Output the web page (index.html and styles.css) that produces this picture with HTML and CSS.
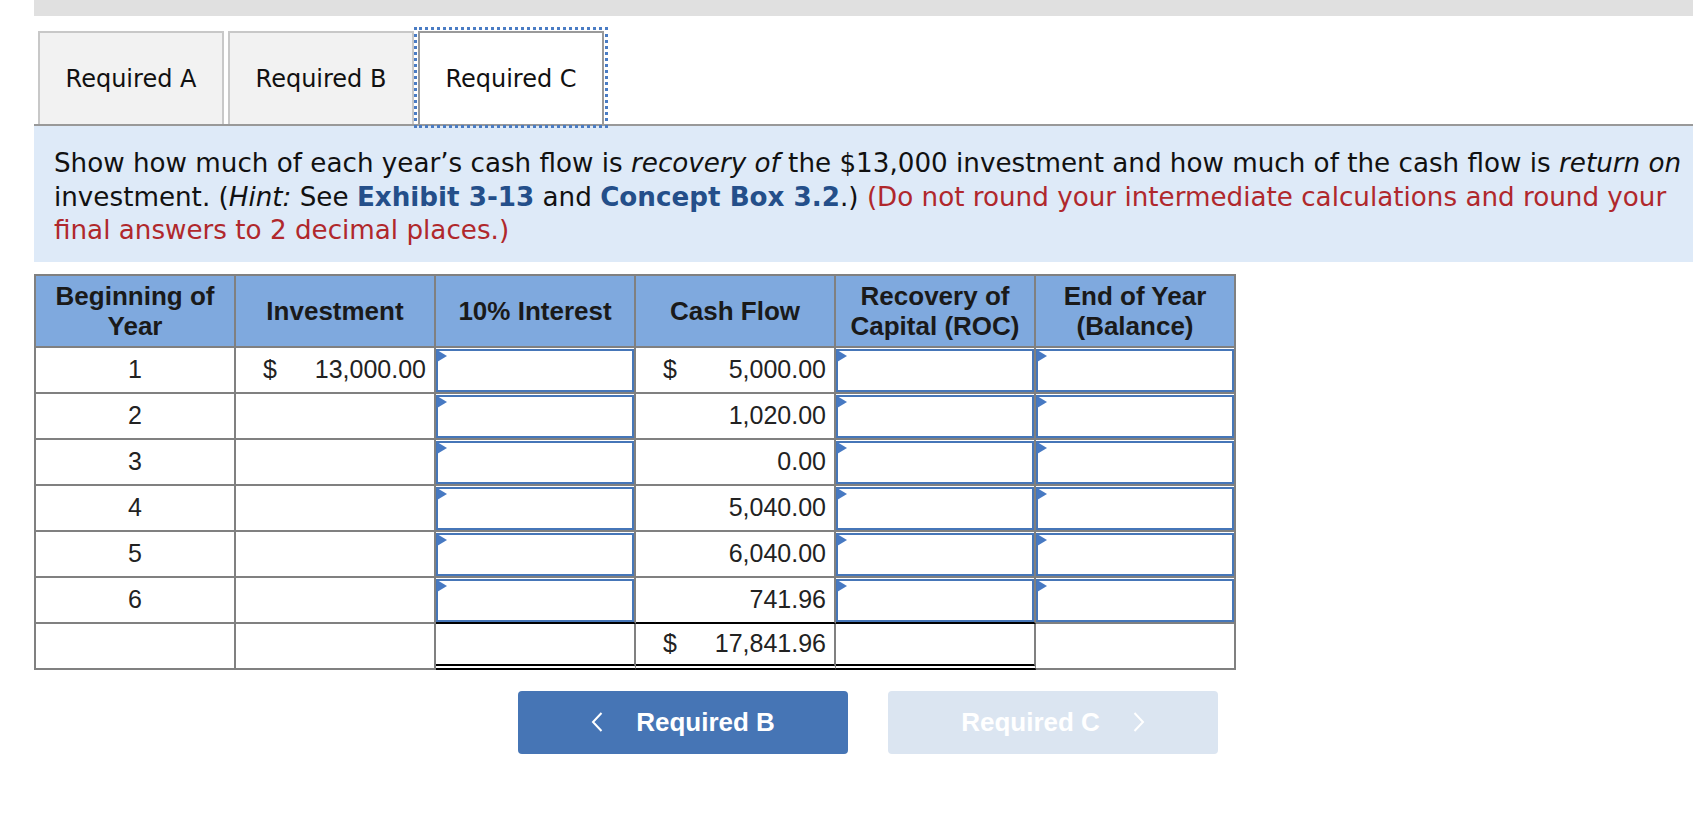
FILE: index.html
```html
<!DOCTYPE html>
<html lang="en">
<head>
<meta charset="utf-8">
<title>Required C</title>
<link rel="stylesheet" href="styles.css">
</head>
<body>
<div class="page">
  <div class="topbar"></div>
  <div class="tabs">
    <div class="tab">Required A</div>
    <div class="tab">Required B</div>
    <div class="tab active">Required C</div>
  </div>
  <div class="prompt">
    <p>Show how much of each year’s cash flow is <em>recovery of</em> the $13,000 investment and how much of the cash flow is <em>return on</em> investment. (<em>Hint:</em> See <b class="ref">Exhibit 3-13</b> and <b class="ref">Concept Box 3.2</b>.) <span class="warn">(Do not round your intermediate calculations and round your</span> <span class="warn">final answers to 2 decimal places.)</span></p>
  </div>
  <table class="grid">
    <thead>
      <tr>
        <th>Beginning of<br>Year</th>
        <th>Investment</th>
        <th>10% Interest</th>
        <th>Cash Flow</th>
        <th>Recovery of<br>Capital (ROC)</th>
        <th>End of Year<br>(Balance)</th>
      </tr>
    </thead>
    <tbody>
      <tr>
        <td class="yr">1</td>
        <td class="amt"><div class="money"><span>$</span><span>13,000.00</span></div></td>
        <td class="in"><div class="box"></div></td>
        <td class="amt"><div class="money"><span>$</span><span>5,000.00</span></div></td>
        <td class="in"><div class="box"></div></td>
        <td class="in"><div class="box"></div></td>
      </tr>
      <tr>
        <td class="yr">2</td>
        <td></td>
        <td class="in"><div class="box"></div></td>
        <td class="num">1,020.00</td>
        <td class="in"><div class="box"></div></td>
        <td class="in"><div class="box"></div></td>
      </tr>
      <tr>
        <td class="yr">3</td>
        <td></td>
        <td class="in"><div class="box"></div></td>
        <td class="num">0.00</td>
        <td class="in"><div class="box"></div></td>
        <td class="in"><div class="box"></div></td>
      </tr>
      <tr>
        <td class="yr">4</td>
        <td></td>
        <td class="in"><div class="box"></div></td>
        <td class="num">5,040.00</td>
        <td class="in"><div class="box"></div></td>
        <td class="in"><div class="box"></div></td>
      </tr>
      <tr>
        <td class="yr">5</td>
        <td></td>
        <td class="in"><div class="box"></div></td>
        <td class="num">6,040.00</td>
        <td class="in"><div class="box"></div></td>
        <td class="in"><div class="box"></div></td>
      </tr>
      <tr class="last">
        <td class="yr">6</td>
        <td></td>
        <td class="in sum-top"><div class="box"></div></td>
        <td class="num sum-top">741.96</td>
        <td class="in sum-top"><div class="box"></div></td>
        <td class="in"><div class="box"></div></td>
      </tr>
      <tr class="total">
        <td></td>
        <td></td>
        <td class="sum"></td>
        <td class="amt sum"><div class="money"><span>$</span><span>17,841.96</span></div></td>
        <td class="sum"></td>
        <td></td>
      </tr>
    </tbody>
  </table>
  <div class="nav">
    <div class="btn prev">
      <svg class="chev" width="12" height="20" viewBox="0 0 12 20"><polyline points="10.5,1 2,10 10.5,19" fill="none" stroke="#fff" stroke-width="2"/></svg>
      <span>Required B</span>
    </div>
    <div class="btn next">
      <span>Required C</span>
      <svg class="chev" width="12" height="20" viewBox="0 0 12 20"><polyline points="1.5,1 10,10 1.5,19" fill="none" stroke="#fff" stroke-width="2"/></svg>
    </div>
  </div>
</div>
</body>
</html>
```

FILE: styles.css
```css
html, body {
  margin: 0;
  padding: 0;
  background: #fff;
  overflow: hidden;
}

.page {
  margin-left: 34px;
  width: 1668px;
}

.topbar {
  height: 16px;
  background: #e0e0e0;
}

.tabs {
  display: flex;
  gap: 4px;
  padding-left: 4px;
  margin-top: 15px;
}

.tab {
  box-sizing: border-box;
  width: 186px;
  height: 93px;
  display: flex;
  align-items: center;
  justify-content: center;
  background: #f2f2f2;
  border: 2px solid #c8c8c8;
  border-bottom: none;
  font: 24px "DejaVu Sans", Verdana, sans-serif;
  color: #111;
}

.tab.active {
  background: #fff;
  border-color: #9a9a9a;
  outline: 3px dotted #4a7cc4;
  outline-offset: 1px;
  position: relative;
  z-index: 1;
}

.prompt {
  background: #deeaf8;
  border-top: 2px solid #999;
  padding: 21px 20px 14px;
  font: 26.2px/33.5px "DejaVu Sans", Verdana, sans-serif;
  color: #111;
}

.prompt p {
  margin: 0;
}

.prompt .ref {
  color: #244f8a;
}

.prompt .warn {
  color: #b0282c;
}

.grid {
  margin-top: 12px;
  border-collapse: separate;
  border-spacing: 0;
  table-layout: fixed;
  width: 1202px;
  border-top: 2px solid #808080;
  border-left: 2px solid #808080;
  font: 25px "Liberation Sans", Arial, sans-serif;
  color: #222;
}

.grid th,
.grid td {
  box-sizing: border-box;
  width: 200px;
  border-right: 2px solid #808080;
  border-bottom: 2px solid #808080;
}

.grid th {
  height: 72px;
  background: #7fa9de;
  font-weight: bold;
  font-size: 26px;
  line-height: 30px;
  padding: 1px 4px 0;
  color: #1a1a1a;
}

.grid td {
  height: 46px;
  padding: 0 8px;
  vertical-align: middle;
}

.grid td.yr {
  text-align: center;
}

.grid td.num {
  text-align: right;
}

.grid td.amt {
  padding: 0 8px 0 27px;
}

.money {
  display: flex;
  justify-content: space-between;
}

.grid td.in {
  padding: 1px 0 0 0;
  vertical-align: top;
}

.box {
  position: relative;
  box-sizing: border-box;
  height: 43px;
  border: 2px solid #4676b8;
  background: #fff;
}

.box::before {
  content: "";
  position: absolute;
  left: -1px;
  top: -1px;
  border-left: 10px solid #4779c2;
  border-top: 6.5px solid transparent;
  border-bottom: 6.5px solid transparent;
}

.grid td.sum-top {
  border-bottom-color: #000;
}

.grid td.sum {
  border-bottom: 6px double #000;
}

.nav {
  display: flex;
  justify-content: center;
  gap: 40px;
  margin-top: 21px;
}

.btn {
  box-sizing: border-box;
  width: 330px;
  height: 63px;
  border-radius: 4px;
  display: flex;
  align-items: center;
  justify-content: center;
  gap: 33px;
  color: #fff;
  font: bold 26px "Liberation Sans", Arial, sans-serif;
}

.btn.prev {
  background: #4675b5;
}

.btn.next {
  background: #dbe5f1;
}

.chev {
  display: block;
}
```
